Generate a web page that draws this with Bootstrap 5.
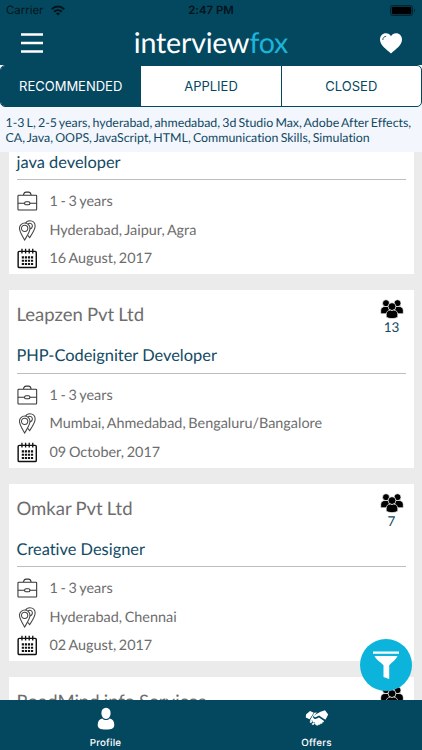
<!DOCTYPE html>
<html lang="en">
<head>
<meta charset="utf-8">
<meta name="viewport" content="width=device-width, initial-scale=1">
<title>interviewfox</title>
<link href="https://cdn.jsdelivr.net/npm/bootstrap@5.3.0/dist/css/bootstrap.min.css" rel="stylesheet">
<style>
:root{--navy:#04485f;--cyan:#0cb4dc}
body{font-family:Lato,"Open Sans",sans-serif;background:#ebebeb;height:750px;color:#6d6d6d;text-rendering:geometricPrecision;font-variant-ligatures:none}
svg{display:block;flex:none}
.bg-navy{background:var(--navy)}
.text-navy{color:#124a63}
.ui-font{font-family:Inter,Roboto,sans-serif}
.status-bar{height:21px;font-size:11.4px;line-height:21px;color:#02141b;padding:0 6px}
.status-bar>*{flex:1 1 0}
.brand-bar{height:44px;padding:0 20.5px 0 20.5px}
.brand{font-size:28.6px;line-height:44px;color:#fff;letter-spacing:-.2px}
.brand span{color:#1cb4da}
.segments{height:42px;background:#fff;border:1px solid var(--navy);border-radius:5px}
.segments .btn{flex:1 1 0;border:0;border-radius:0;font-size:13px;line-height:40px;padding:0;color:var(--navy)}
.segments .btn+.btn{border-left:1px solid var(--navy)}
.segments .btn.active{background:var(--navy);color:#fff}
.segments-wrap{background:#f3f6fd}
.criteria{background:#f3f6fd;height:45px;padding:8px 5.5px 0;font-size:12.38px;line-height:15px;white-space:nowrap;word-spacing:-1px}
.jobs{padding:0 8.5px;min-height:0}
.job-list{margin-top:-55.5px;gap:16px}
.job{height:177.5px;border:0;border-radius:0;padding:0 8px;background:#fff;flex:none}
.job-head{height:50px}
.company{font-size:18.5px;line-height:49px;word-spacing:-.6px}
.applicants{width:24px;margin-right:2px;padding-top:9px;font-size:13.5px;line-height:17px}
.role{font-size:16.4px;line-height:31px;height:32.5px}
.rule{height:1px;background:#bdbdbd;margin-bottom:7.5px}
.fact{height:28.5px;font-size:14.4px;line-height:29px;gap:12px;word-spacing:-1px}
.tabs{height:50.5px}
.tabs a{flex:1 1 0;font-size:9.8px;line-height:12px;color:#fff;padding-top:7px;font-weight:500;letter-spacing:.2px}
.filter-btn{position:absolute;left:360px;top:638.5px;width:52px;height:52px;background:var(--cyan);border:0}
</style>
</head>
<body class="d-flex flex-column overflow-hidden position-relative">
<svg width="0" height="0" class="position-absolute">
<symbol id="people" viewBox="0 0 24 20"><g stroke="#fff" stroke-width=".7"><circle cx="6" cy="4.2" r="3.5"/><circle cx="17.500" cy="4.200" r="3.500"/><path d="M.7 14.800V11.500C.7 9 2.500 7.500 5 7.500h3.500l2 7.300zM23.300 14.800V11.500C23.300 9 21.500 7.500 19 7.500h-3.500l-2 7.300z"/><circle cx="12" cy="7.600" r="3.900"/><path d="M6.200 18.200v-2.700c0-2.700 1.800-4.400 4.200-4.400.9.600 2.300.6 3.200 0 2.400 0 4.200 1.700 4.200 4.400v2.700c-3 1.900-8.600 1.900-11.600 0z"/></g></symbol>
<symbol id="case" viewBox="0 0 22 22"><g fill="none" stroke="#333" stroke-width="1.100"><rect x="1" y="4.500" width="19.600" height="15.500" rx=".8"/><path d="M6.800 4.200C7.200 2.300 8.500 1.200 9.500 1.200h2.600c1 0 2.300 1.100 2.700 3M1 12.800h7M13.500 12.800h7"/><rect x="8" y="11.200" width="5.500" height="3.300" rx="1.500"/></g></symbol>
<symbol id="pins" viewBox="0 0 22 22"><g fill="none" stroke="#444" stroke-width="1.100"><path d="M8 21C5.500 16.500 2.600 12.500 2.600 8.700a5.500 5.500 0 0 1 11 0C13.600 12.500 10.500 16.500 8 21z"/><circle cx="8" cy="8.700" r="3.300"/><path d="M9 3.500C9.800 1.800 11.400.8 13.500.8c3.200 0 5.500 2.300 5.500 5.500 0 4-2.800 7.700-5.800 12.200l-2-2.500M11.500 4.200c2.400-2 5 .1 4.600 2.500-.2 1.400-1.200 2.300-2.500 2.700"/></g></symbol>
<symbol id="cal" viewBox="0 0 22 22"><rect x="1.200" y="3.500" width="19" height="17" rx="1.200" fill="none" stroke="#111" stroke-width="1.500"/><path d="M5.200.8v5M9 .8v5M12.800.8v5M16.500.8v5" stroke="#111" stroke-width="1.400"/><path d="M5 9.800h12M5 13.300h12M5 16.800h12" stroke="#111" stroke-width="2.200" stroke-dasharray="2.300 .9"/></symbol>
</svg>

<header class="bg-navy flex-shrink-0">
  <div class="status-bar ui-font d-flex">
    <div class="d-flex align-items-center gap-2"><span>Carrier</span>
      <svg width="14" height="11" viewBox="0 0 14 11" fill="none" stroke="#02141b" stroke-width="2"><path d="M.8 4.200C4.300.6 9.700.6 13.200 4.200M3.200 6.700c2.200-2.100 5.400-2.100 7.600 0"/><path d="M4.900 8.400 7 10.600l2.100-2.200C8 7.200 6 7.200 4.900 8.400z" fill="#02141b" stroke="none"/></svg></div>
    <div class="text-center fw-semibold">2:47 PM</div>
    <div class="d-flex align-items-center justify-content-end">
      <svg width="26" height="11" viewBox="0 0 26 11"><rect x=".5" y=".5" width="22" height="10" rx="2" fill="none" stroke="#02232f"/><rect x="1.800" y="1.800" width="19.500" height="7.400" rx="1" fill="#000"/><path d="M24 3.500q2 2 0 4z" fill="#02232f"/></svg></div>
  </div>
  <div class="brand-bar d-flex align-items-center justify-content-between">
    <svg width="22" height="20" viewBox="0 0 22 20" stroke="#fff" stroke-width="2.600"><path d="M0 1.500h22M0 10h22M0 18.500h22"/></svg>
    <div class="brand">interview<span>fox</span></div>
    <svg width="22" height="21" viewBox="0 0 22 21"><path d="M11 20.500C6 16 0 12 0 6.500 0 3 2.600.3 5.900.3c2.200 0 4.100 1.100 5.100 3 1-1.900 2.900-3 5.100-3C19.400.3 22 3 22 6.500 22 12 16 16 11 20.500z" fill="#fff"/><path d="M2.800 7c0-2.200 1.400-3.600 3.300-3.700" fill="none" stroke="#04485f" stroke-width=".9"/></svg>
  </div>
</header>
<div class="segments-wrap flex-shrink-0"><div class="segments ui-font d-flex overflow-hidden">
  <button class="btn active">RECOMMENDED</button><button class="btn">APPLIED</button><button class="btn">CLOSED</button>
</div></div>
<div class="criteria text-navy flex-shrink-0">1-3 L, 2-5 years, hyderabad, ahmedabad, 3d Studio Max, Adobe After Effects,<br>CA, Java, OOPS, JavaScript, HTML, Communication Skills, Simulation</div>

<main class="jobs flex-fill overflow-hidden"><div class="job-list d-flex flex-column">
  <article class="card job"><div class="job-head"></div>
    <div class="role text-navy">java developer</div><div class="rule"></div>
    <div class="fact d-flex align-items-center"><svg width="21" height="21"><use href="#case"/></svg>1 - 3 years</div>
    <div class="fact d-flex align-items-center"><svg width="21" height="21"><use href="#pins"/></svg>Hyderabad, Jaipur, Agra</div>
    <div class="fact d-flex align-items-center"><svg width="21" height="21"><use href="#cal"/></svg>16 August, 2017</div>
  </article>
  <article class="card job"><div class="job-head d-flex justify-content-between"><div class="company">Leapzen Pvt Ltd</div>
      <div class="applicants text-navy text-center"><svg width="24" height="20"><use href="#people"/></svg>13</div></div>
    <div class="role text-navy">PHP-Codeigniter Developer</div><div class="rule"></div>
    <div class="fact d-flex align-items-center"><svg width="21" height="21"><use href="#case"/></svg>1 - 3 years</div>
    <div class="fact d-flex align-items-center"><svg width="21" height="21"><use href="#pins"/></svg>Mumbai, Ahmedabad, Bengaluru/Bangalore</div>
    <div class="fact d-flex align-items-center"><svg width="21" height="21"><use href="#cal"/></svg>09 October, 2017</div>
  </article>
  <article class="card job"><div class="job-head d-flex justify-content-between"><div class="company">Omkar Pvt Ltd</div>
      <div class="applicants text-navy text-center"><svg width="24" height="20"><use href="#people"/></svg>7</div></div>
    <div class="role text-navy">Creative Designer</div><div class="rule"></div>
    <div class="fact d-flex align-items-center"><svg width="21" height="21"><use href="#case"/></svg>1 - 3 years</div>
    <div class="fact d-flex align-items-center"><svg width="21" height="21"><use href="#pins"/></svg>Hyderabad, Chennai</div>
    <div class="fact d-flex align-items-center"><svg width="21" height="21"><use href="#cal"/></svg>02 August, 2017</div>
  </article>
  <article class="card job"><div class="job-head d-flex justify-content-between"><div class="company">RoadMind info Services</div>
      <div class="applicants"><svg width="24" height="20"><use href="#people"/></svg></div></div>
  </article>
</div></main>

<nav class="tabs bg-navy ui-font d-flex flex-shrink-0">
  <a class="d-flex flex-column align-items-center text-decoration-none" href="#"><svg width="18" height="23" viewBox="0 0 18 23" fill="#fff" class="mb-2"><path d="M9 .8c2.900 0 4.600 2.100 4.600 5.200S11.700 12 9 12 4.400 9.100 4.400 6 6.100.8 9 .8z"/><path d="M5.300 11.500c2 2 5.400 2 7.400 0 3 .4 4.600 2.800 4.600 6.500 0 3.200-2.300 4.500-8.300 4.500S.7 21.200.7 18c0-3.700 1.600-6.100 4.600-6.500z"/></svg>Profile</a>
  <a class="d-flex flex-column align-items-center text-decoration-none" href="#"><svg width="24" height="23" viewBox="0 0 24 23" fill="#fff" class="mb-2"><path d="M1 7.500 5 4l3.800 1.700L4.600 12.300.8 10.500zM15.500 4.800 20 3.300l3.200 4.200-2.600 5-1.500-.6-5-3.300-3.600 1.600c-1.400.2-2-1-1.200-1.900z"/><path d="m9.300 5.700 2.700-.3-3.700 3.900c-.7 1.900 1.200 3.100 2.800 2.400l2.900-1.300 4.700 3.300c.7 1-.3 1.900-1.300 1.500.4 1.200-.7 1.900-1.800 1.400.2 1-1 1.600-2.100.9.100 1.200-1.500 1.500-2.500.4l-1-.7c.7-1.400-.6-2.400-1.900-2.100.1-1.300-1.300-1.900-2.400-1.200l-.8-.4z"/><path d="m5.200 14.400 1.500-1c.9.200.9 1 .2 1.700l-1 .6c-.8 0-1.100-.7-.7-1.300zM7.300 16.500l1.500-1c.9.200.9 1 .2 1.700l-1 .6c-.8 0-1.100-.7-.7-1.300z" stroke="#fff" stroke-width=".5"/></svg>Offers</a>
</nav>
<button class="btn filter-btn rounded-circle p-0 d-flex justify-content-center align-items-center" aria-label="Filter"><svg width="28" height="28" viewBox="0 0 28 28" fill="#fff"><path d="M1 .5h26v2.300H1zM2.500 5h23c-1.500 3.500-5 5.800-8.300 9.300V28L11.500 26V14.300C8 10.800 4 8.500 2.500 5z"/></svg></button>
<script src="https://cdn.jsdelivr.net/npm/bootstrap@5.3.0/dist/js/bootstrap.bundle.min.js"></script>
</body>
</html>
